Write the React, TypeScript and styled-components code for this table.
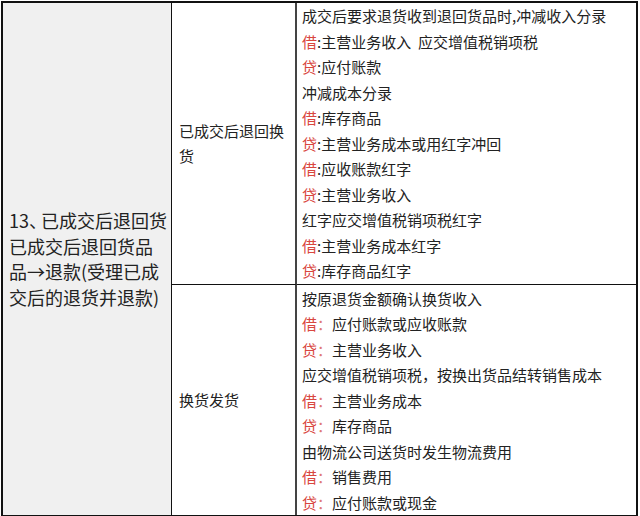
import { FC } from 'react'
import styled, { createGlobalStyle } from 'styled-components'

const GlobalStyle = createGlobalStyle`
  html, body {
    margin: 0;
    padding: 0;
    background: #fff;
  }
  body {
    font-family: 'Noto Sans CJK SC', 'Microsoft YaHei', sans-serif;
    color: #222;
  }
`

const Table = styled.div`
  display: grid;
  grid-template-columns: 169px 125px 1fr;
  grid-template-rows: auto auto;
  width: 637px;
  margin: 1px 0 0 1px;
  border: 2px solid #111;
  box-sizing: border-box;
`

const TitleCell = styled.div`
  grid-row: 1 / span 2;
  display: flex;
  flex-direction: column;
  justify-content: center;
  padding: 0 0 0 6px;
  background: #f0f0f0;
  border-right: 1px solid #111;
  font-size: 18px;
  line-height: 25.5px;
  white-space: nowrap;
  overflow: hidden;
`

const Pause = styled.span`
  letter-spacing: -6px;
`

const CaseCell = styled.div<{ $last?: boolean }>`
  display: flex;
  align-items: center;
  padding: 0 8px 0 7px;
  font-size: 15px;
  line-height: 25px;
  border-right: 2px solid #444;
  border-bottom: ${(p) => (p.$last ? 'none' : '1px solid #111')};
`

const EntryCell = styled.div<{ $last?: boolean }>`
  display: flex;
  flex-direction: column;
  padding: ${(p) => (p.$last ? '1px 0 0 5px' : '0 0 0 5px')};
  font-size: 15px;
  line-height: 25.5px;
  white-space: nowrap;
  border-bottom: ${(p) => (p.$last ? 'none' : '1px solid #111')};
`

const Line = styled.div`
  height: 25.5px;
  white-space: pre;
`

const Tag = styled.span`
  color: #d9473f;
`

const Colon = styled.span<{ $wide?: boolean }>`
  color: ${(p) => (p.$wide ? '#e07a74' : '#222')};
`

type Entry = { tag?: '借' | '贷'; text: string }

type Section = { label: string; wide: boolean; entries: Entry[] }

const SECTIONS: Section[] = [
  {
    label: '已成交后退回换货',
    wide: false,
    entries: [
      { text: '成交后要求退货收到退回货品时,冲减收入分录' },
      { tag: '借', text: '主营业务收入  应交增值税销项税' },
      { tag: '贷', text: '应付账款' },
      { text: '冲减成本分录' },
      { tag: '借', text: '库存商品' },
      { tag: '贷', text: '主营业务成本或用红字冲回' },
      { tag: '借', text: '应收账款红字' },
      { tag: '贷', text: '主营业务收入' },
      { text: '红字应交增值税销项税红字' },
      { tag: '借', text: '主营业务成本红字' },
      { tag: '贷', text: '库存商品红字' },
    ],
  },
  {
    label: '换货发货',
    wide: true,
    entries: [
      { text: '按原退货金额确认换货收入' },
      { tag: '借', text: '应付账款或应收账款' },
      { tag: '贷', text: '主营业务收入' },
      { text: '应交增值税销项税，按换出货品结转销售成本' },
      { tag: '借', text: '主营业务成本' },
      { tag: '贷', text: '库存商品' },
      { text: '由物流公司送货时发生物流费用' },
      { tag: '借', text: '销售费用' },
      { tag: '贷', text: '应付账款或现金' },
    ],
  },
]

const App: FC = () => {
  return (
    <>
      <GlobalStyle />
      <Table>
        <TitleCell>
          <div>
            13<Pause>、</Pause>已成交后退回货
          </div>
          <div>已成交后退回货品</div>
          <div>品→退款(受理已成</div>
          <div>交后的退货并退款)</div>
        </TitleCell>
        {SECTIONS.map((s, si) => {
          const last = si === SECTIONS.length - 1
          return [
            <CaseCell key={`c${si}`} $last={last}>
              {s.label}
            </CaseCell>,
            <EntryCell key={`e${si}`} $last={last}>
              {s.entries.map((e, i) => (
                <Line key={i}>
                  {e.tag && <Tag>{e.tag}</Tag>}
                  {e.tag && <Colon $wide={s.wide}>{s.wide ? '：' : ':'}</Colon>}
                  {e.text}
                </Line>
              ))}
            </EntryCell>,
          ]
        })}
      </Table>
    </>
  )
}

export default App
